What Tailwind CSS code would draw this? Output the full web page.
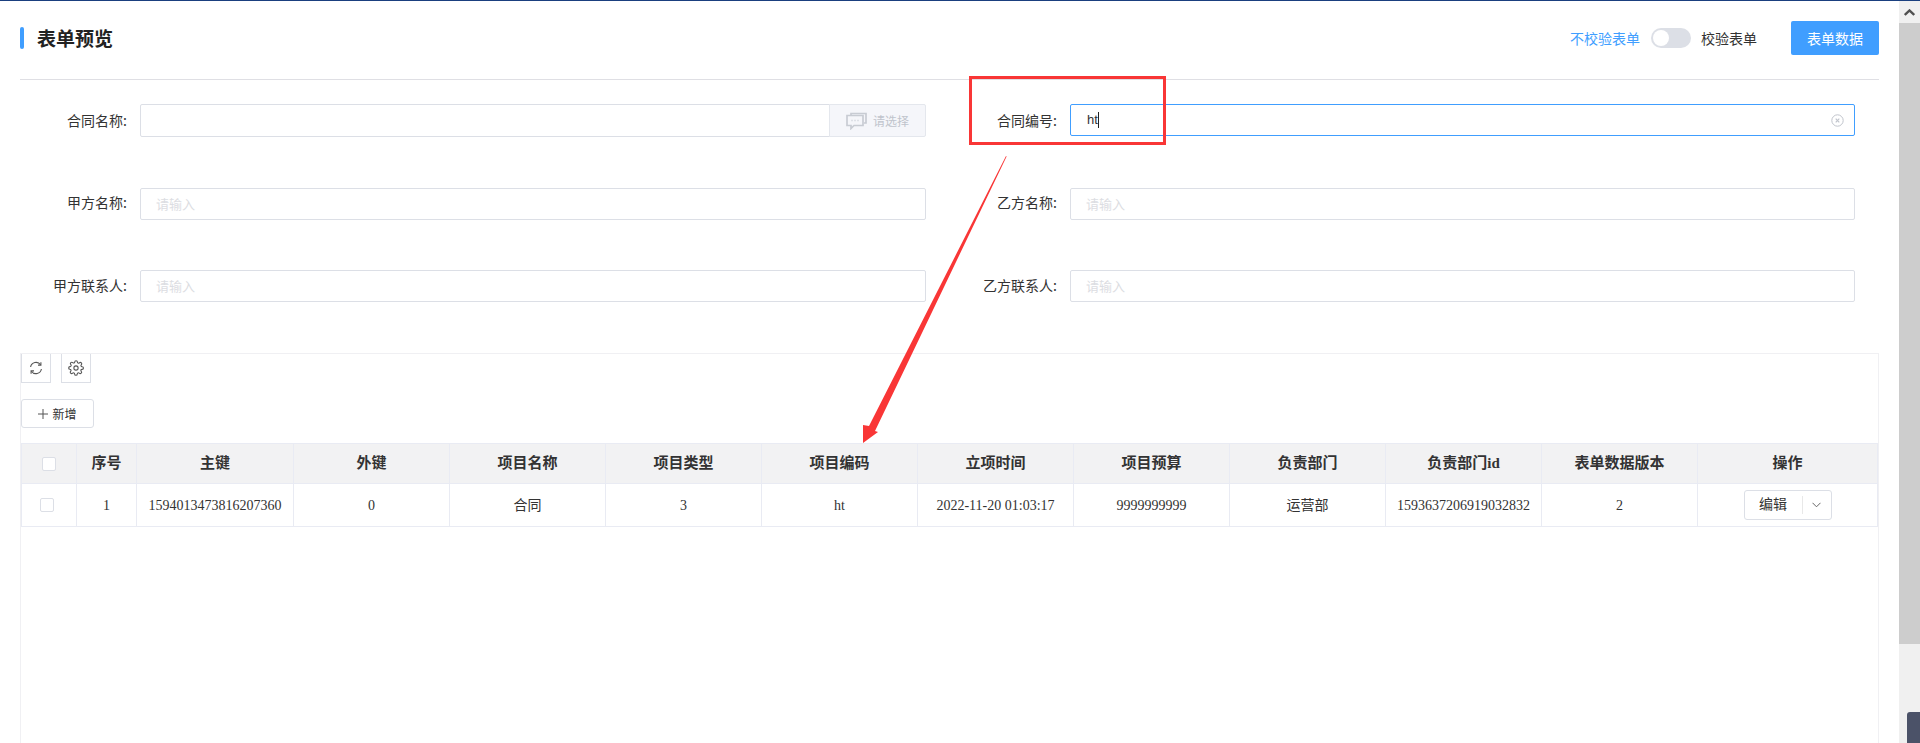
<!DOCTYPE html>
<html lang="zh-CN">
<head>
    <meta charset="UTF-8">
    <meta name="viewport" content="width=device-width, initial-scale=1.0">
    <title>表单预览</title>
    <script src="https://cdn.jsdelivr.net/npm/@tailwindcss/browser@4"></script>
</head>
<body class="relative h-[743px] overflow-hidden bg-white font-['Noto_Sans_CJK_SC',sans-serif] text-[14px] text-[#333]">
    <div class="h-px bg-[#1a3f7f]"></div>
    <div class="flex h-[742px]">
        <!-- page -->
        <div class="flex-1 min-w-0 pl-5 pr-5 flex flex-col">
            <!-- title bar -->
            <div class="h-[79px] flex items-start border-b border-[#dfdfe4]">
                <div class="mt-[26px] w-1 h-[22px] rounded-[2px] bg-[#409eff]"></div>
                <h1 class="mt-[24px] ml-[13px] text-[19px] leading-[26px] font-bold text-[#222]">表单预览</h1>
                <div class="ml-auto mt-5 flex items-center h-[34px]">
                    <span class="text-[#409eff]">不校验表单</span>
                    <span class="ml-[11px] w-10 h-5 rounded-full bg-[#dcdfe6] p-0.5 flex">
                        <span class="w-4 h-4 rounded-full bg-white"></span>
                    </span>
                    <span class="ml-2.5">校验表单</span>
                    <button class="ml-[34px] w-[88px] h-[34px] rounded-[2px] bg-[#409eff] text-white">表单数据</button>
                </div>
            </div>

            <!-- form -->
            <div class="pt-6 grid grid-cols-[906px_930px] gap-y-[50px]">
                <div class="flex items-center h-[33px]">
                    <label class="w-[107px] text-right">合同名称:</label>
                    <div class="ml-[13px] flex-1 flex h-[33px]">
                        <input class="flex-1 min-w-0 border border-[#dcdfe6] rounded-l-[2px] outline-none">
                        <div class="w-[97px] -ml-px flex items-center justify-center gap-1.5 bg-[#f5f6fa] border border-[#e4e7ed] rounded-r-[2px] text-[12px] text-[#c0c4cc]">
                            <svg width="21" height="18" viewBox="0 0 21 18" fill="none" stroke="#c8ccd3" stroke-width="1.7">
                                <path d="M5 3V1.5h15V11h-2"/>
                                <path d="M1 3.5h16v10H8l-3 3v-3H1z"/>
                                <path d="M5.5 8.5h1M8.5 8.5h1M11.5 8.5h1" stroke-width="1.6"/>
                            </svg>
                            请选择
                        </div>
                    </div>
                </div>
                <div class="flex items-start h-[33px]">
                    <label class="w-[131px] text-right leading-[32px]">合同编号:</label>
                    <div class="ml-[13px] w-[785px] h-[32px] border border-[#409eff] rounded-[2px] flex items-center pl-4 pr-[10px] font-['Liberation_Sans',sans-serif] text-[13px]">
                        <span>ht</span><span class="w-px h-[16px] bg-[#222]"></span>
                        <svg class="ml-auto" width="13" height="13" viewBox="0 0 13 13" fill="none" stroke="#c0c4cc">
                            <circle cx="6.5" cy="6.5" r="5.7"/>
                            <path d="M4.7 4.7l3.6 3.6M8.3 4.7L4.7 8.3" stroke-width="1.2"/>
                        </svg>
                    </div>
                </div>

                <div class="flex items-end h-[33px]">
                    <label class="w-[107px] text-right leading-[32px] mb-[2px]">甲方名称:</label>
                    <input placeholder="请输入" class="ml-[13px] flex-1 min-w-0 h-[32px] px-[15px] pb-[2px] border border-[#dcdfe6] rounded-[2px] text-[13px] outline-none placeholder:text-[#dcdde2]">
                </div>
                <div class="flex items-end h-[33px]">
                    <label class="w-[131px] text-right leading-[32px] mb-[2px]">乙方名称:</label>
                    <input placeholder="请输入" class="ml-[13px] w-[785px] h-[32px] px-[15px] pb-[2px] border border-[#dcdfe6] rounded-[2px] text-[13px] outline-none placeholder:text-[#dcdde2]">
                </div>

                <div class="flex items-start h-[33px]">
                    <label class="w-[107px] text-right leading-[30px]">甲方联系人:</label>
                    <input placeholder="请输入" class="ml-[13px] flex-1 min-w-0 h-[32px] px-[15px] pb-[2px] border border-[#dcdfe6] rounded-[2px] text-[13px] outline-none placeholder:text-[#dcdde2]">
                </div>
                <div class="flex items-start h-[33px]">
                    <label class="w-[131px] text-right leading-[30px]">乙方联系人:</label>
                    <input placeholder="请输入" class="ml-[13px] w-[785px] h-[32px] px-[15px] pb-[2px] border border-[#dcdfe6] rounded-[2px] text-[13px] outline-none placeholder:text-[#dcdde2]">
                </div>
            </div>

            <!-- table panel -->
            <div class="mt-[50px] flex-1 border border-[#f0f0f3] border-b-0">
                <div class="flex gap-[10px]">
                    <button class="w-[30px] h-[29px] border border-t-0 border-[#dcdfe6] flex items-center justify-center">
                        <svg width="14" height="14" viewBox="0 0 14 14" fill="none" stroke="#555" stroke-width="1.1">
                            <path d="M1.6 6A5.5 5.5 0 0 1 11.6 3.8"/>
                            <path d="M12.4 8A5.5 5.5 0 0 1 2.4 10.2"/>
                            <path d="M11.9 1.2v2.9H9M2.1 12.8V9.9H5"/>
                        </svg>
                    </button>
                    <button class="w-[30px] h-[29px] border border-t-0 border-[#dcdfe6] flex items-center justify-center">
                        <svg width="16" height="16" viewBox="0 0 24 24" fill="none" stroke="#555" stroke-width="1.6">
                            <circle cx="12" cy="12" r="3.2"/>
                            <path d="M19.4 15a1.7 1.7 0 0 0 .3 1.8l.1.1a2 2 0 1 1-2.9 2.9l-.1-.1a1.7 1.7 0 0 0-2.9 1.2V21a2 2 0 1 1-4 0v-.1a1.7 1.7 0 0 0-2.9-1.2l-.1.1a2 2 0 1 1-2.9-2.9l.1-.1a1.7 1.7 0 0 0-1.2-2.9H3a2 2 0 1 1 0-4h.1a1.7 1.7 0 0 0 1.2-2.9l-.1-.1a2 2 0 1 1 2.9-2.9l.1.1a1.7 1.7 0 0 0 2.9-1.2V3a2 2 0 1 1 4 0v.1a1.7 1.7 0 0 0 2.9 1.2l.1-.1a2 2 0 1 1 2.9 2.9l-.1.1a1.7 1.7 0 0 0 1.2 2.9h.1a2 2 0 1 1 0 4h-.1a1.7 1.7 0 0 0-1.5 1z"/>
                        </svg>
                    </button>
                </div>
                <button class="mt-4 w-[73px] h-[29px] border border-[#dcdfe6] rounded-[3px] flex items-center justify-center gap-1 text-[12px]">
                    <svg width="10" height="10" viewBox="0 0 10 10" stroke="#555"><path d="M5 0v10M0 5h10"/></svg>
                    新增
                </button>

                <table class="mt-[15px] w-[1856px] table-fixed border-collapse font-['Liberation_Serif','Noto_Sans_CJK_SC',serif] text-center">
                    <colgroup>
                        <col class="w-[55px]"><col class="w-[60px]"><col class="w-[157px]"><col class="w-[156px]"><col class="w-[156px]"><col class="w-[156px]"><col class="w-[156px]"><col class="w-[156px]"><col class="w-[156px]"><col class="w-[156px]"><col class="w-[156px]"><col class="w-[156px]"><col class="w-[180px]">
                    </colgroup>
                    <thead>
                        <tr class="h-[40px] bg-[#f2f2f3] text-[15px] *:border *:border-[#e9ebf3] *:font-bold">
                            <th><span class="block mx-auto w-3.5 h-3.5 border border-[#dcdfe6] bg-white rounded-[2px]"></span></th>
                            <th>序号</th><th>主键</th><th>外键</th><th>项目名称</th><th>项目类型</th><th>项目编码</th><th>立项时间</th><th>项目预算</th><th>负责部门</th><th>负责部门id</th><th>表单数据版本</th><th>操作</th>
                        </tr>
                    </thead>
                    <tbody>
                        <tr class="h-[43px] *:border *:border-[#e9ebf3]">
                            <td><span class="block ml-[18px] w-3.5 h-3.5 border border-[#dcdfe6] rounded-[2px]"></span></td>
                            <td>1</td><td>1594013473816207360</td><td>0</td><td>合同</td><td>3</td><td>ht</td><td>2022-11-20 01:03:17</td><td>9999999999</td><td>运营部</td><td>1593637206919032832</td><td>2</td>
                            <td>
                                <div class="mx-auto w-[88px] h-[30px] border border-[#dcdfe6] rounded-[3px] flex items-center">
                                    <span class="w-[58px] border-r border-[#e8e8e8] leading-[18px]">编辑</span>
                                    <svg class="mx-auto" width="9" height="6" viewBox="0 0 9 6" fill="none" stroke="#666"><path d="M.5.8L4.5 4.8 8.5.8"/></svg>
                                </div>
                            </td>
                        </tr>
                    </tbody>
                </table>
            </div>
        </div>

        <!-- browser scrollbar -->
        <div class="w-[21px] flex flex-col bg-[#f0f0f0]">
            <div class="h-[22px] flex items-center justify-center">
                <svg width="11" height="7" viewBox="0 0 11 7" fill="none" stroke="#505050" stroke-width="2.4"><path d="M.8 6L5.5 1.5 10.2 6"/></svg>
            </div>
            <div class="h-[621px] bg-[#cdcdcd]"></div>
            <div class="flex-1 flex flex-col justify-end items-end">
                <div class="w-[13px] h-[31px] rounded-tl-[3px] bg-[#4b5268]"></div>
            </div>
        </div>
    </div>

    <!-- annotations drawn over the screenshot -->
    <div class="absolute left-[969px] top-[76px] w-[197px] h-[69px] border-[3px] border-[#f93636]"></div>
    <svg class="absolute left-0 top-0 pointer-events-none" width="1920" height="743" viewBox="0 0 1920 743">
        <polygon fill="#f93636" points="1006,156 1006.6,156.4 875,431 878,432 863,443 863,425 869,426"/>
    </svg>
</body>
</html>
